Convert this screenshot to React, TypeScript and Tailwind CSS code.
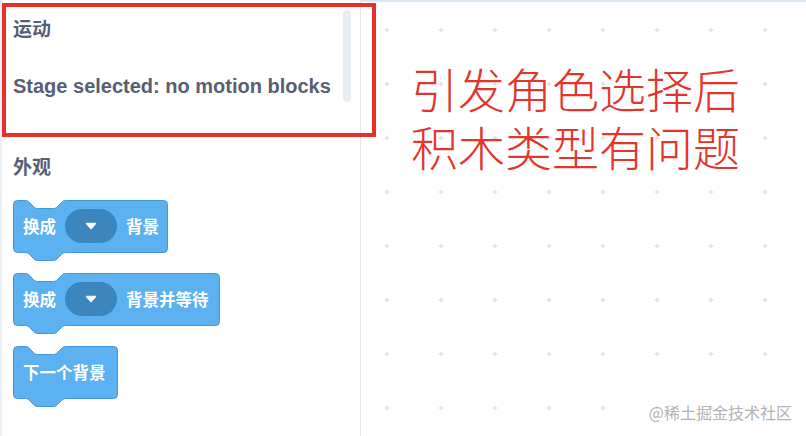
import React from "react";

const CJK = "font-['Noto_Sans_CJK_SC','Noto_Sans',sans-serif]";

function blockPath(w: number, h: number) {
  return `M0,4 A4,4 0 0 1 4,0 H12 C14,0 15,1 16,2 L20,6 C21,7 22,8 24,8 H40 C42,8 43,7 44,6 L48,2 C49,1 50,0 52,0 H${w - 4} A4,4 0 0 1 ${w},4 V${h - 4} A4,4 0 0 1 ${w - 4},${h} H52 C50,${h} 49,${h + 1} 48,${h + 2} L44,${h + 6} C43,${h + 7} 42,${h + 8} 40,${h + 8} H24 C22,${h + 8} 21,${h + 7} 20,${h + 6} L16,${h + 2} C15,${h + 1} 14,${h} 12,${h} H4 A4,4 0 0 1 0,${h - 4} Z`;
}

function Dropdown() {
  return (
    <div className="flex h-[34px] w-[52px] items-center justify-center rounded-full bg-[#3a86bd]">
      <svg width="12" height="8" viewBox="0 0 12 8">
        <path d="M1.5,1.5 H10.5 L6,6.5 Z" fill="#fff" stroke="#fff" strokeWidth="1.5" strokeLinejoin="round" />
      </svg>
    </div>
  );
}

function Block({ width, children }: { width: number; children: React.ReactNode }) {
  const h = 52;
  return (
    <div className="relative h-[52px]" style={{ width }}>
      <svg className="absolute left-0 top-0 overflow-visible" width={width + 1} height={h + 10}>
        <path d={blockPath(width, h)} transform="translate(0.5,0.5)" fill="#5cb1f0" stroke="#4296d6" strokeWidth="1" />
      </svg>
      <div className={`relative flex h-full items-center gap-[9px] pl-[10px] text-[16.5px] font-bold text-white ${CJK}`}>
        {children}
      </div>
    </div>
  );
}

function Grid() {
  return (
    <svg className="absolute inset-0 h-full w-full">
      <defs>
        <pattern id="cross" x="-1" y="3" width="54" height="54" patternUnits="userSpaceOnUse">
          <path d="M24.5,27 H29.5 M27,24.5 V29.5" stroke="#d6d6d6" strokeWidth="1" />
        </pattern>
      </defs>
      <rect width="100%" height="100%" fill="url(#cross)" />
    </svg>
  );
}

export default function App() {
  return (
    <div className="relative flex h-[436px] w-[806px] overflow-hidden bg-white">
      {/* palette */}
      <div className="relative w-[361px] shrink-0 border-l-2 border-r border-l-[#eceff8] border-r-[#e3e6ec] bg-white pl-[11px] text-[#575e75]">
        <div className={`pt-[16px] text-[19px] font-bold leading-[24px] ${CJK}`}>运动</div>
        <div className="mt-[34px] font-['Liberation_Sans',Arial,sans-serif] text-[20px] font-bold leading-[24px]">
          Stage selected: no motion blocks
        </div>
        <div className={`mt-[56px] text-[19px] font-bold leading-[24px] ${CJK}`}>外观</div>
        <div className="mt-[22px] flex flex-col gap-[21px]">
          <Block width={154}>
            <span>换成</span>
            <Dropdown />
            <span>背景</span>
          </Block>
          <Block width={206}>
            <span>换成</span>
            <Dropdown />
            <span>背景并等待</span>
          </Block>
          <Block width={104}>
            <span>下一个背景</span>
          </Block>
        </div>
        {/* scrollbar */}
        <div className="absolute right-[9px] top-[10px] h-[92px] w-[8px] rounded-full bg-[#e8edf5]" />
      </div>

      {/* workspace */}
      <div className="relative flex-1">
        <Grid />
        <div className="absolute left-0 right-0 top-0 h-[2px] bg-[#dce6f3]" />
        <div className={`absolute left-[50px] top-[59px] flex flex-col text-[47px] font-light leading-[58px] text-[#e3352c] ${CJK}`}>
          <span>引发角色选择后</span>
          <span>积木类型有问题</span>
        </div>
        <div className={`absolute right-[14px] top-[402px] text-[16px] leading-[20px] text-[#b3b3b3] ${CJK}`}>
          @稀土掘金技术社区
        </div>
      </div>

      {/* annotation box */}
      <div className="absolute left-[2px] top-[3px] h-[134px] w-[374px] border-4 border-[#e6302a]" />
    </div>
  );
}
